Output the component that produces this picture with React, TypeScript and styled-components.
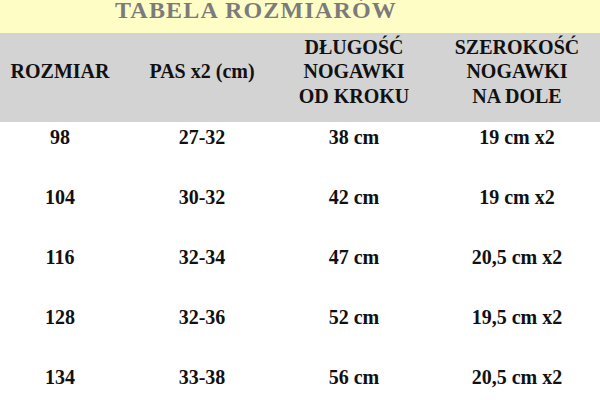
import React from "react";
import styled, { createGlobalStyle } from "styled-components";

const sizes = [
  { size: "98", waist: "27-32", length: "38 cm", width: "19 cm x2" },
  { size: "104", waist: "30-32", length: "42 cm", width: "19 cm x2" },
  { size: "116", waist: "32-34", length: "47 cm", width: "20,5 cm x2" },
  { size: "128", waist: "32-36", length: "52 cm", width: "19,5 cm x2" },
  { size: "134", waist: "33-38", length: "56 cm", width: "20,5 cm x2" },
];

export default function App() {
  return (
    <>
      <GlobalStyle />
      <Page>
        <TitleBand>
          <Title>TABELA ROZMIARÓW</Title>
        </TitleBand>

        <HeaderRow>
          <HeadCell>ROZMIAR</HeadCell>
          <HeadCell>PAS x2 (cm)</HeadCell>
          <HeadCell>
            DŁUGOŚĆ
            <br />
            NOGAWKI
            <br />
            OD KROKU
          </HeadCell>
          <HeadCell>
            SZEROKOŚĆ
            <br />
            NOGAWKI
            <br />
            NA DOLE
          </HeadCell>
        </HeaderRow>

        {sizes.map((row) => (
          <DataRow key={row.size}>
            <Cell>{row.size}</Cell>
            <Cell>{row.waist}</Cell>
            <Cell>{row.length}</Cell>
            <Cell>{row.width}</Cell>
          </DataRow>
        ))}
      </Page>
    </>
  );
}

const GlobalStyle = createGlobalStyle`
  html, body {
    margin: 0;
    padding: 0;
    background: #ffffff;
  }
`;

const Page = styled.div`
  width: 600px;
  height: 400px;
  overflow: hidden;
  background: #ffffff;
  font-family: "Liberation Serif", "Times New Roman", serif;
  font-weight: bold;
  color: #111111;
`;

const TitleBand = styled.div`
  display: flex;
  justify-content: center;
  height: 33px;
  padding-right: 88px;
  background: #fffdc6;
  overflow: hidden;
`;

const Title = styled.h1`
  margin: 0;
  font-size: 24px;
  line-height: 21px;
  letter-spacing: 1.2px;
  color: #7b7b7b;
  white-space: nowrap;
`;

// shared 4-column layout for header and rows
const Columns = styled.div`
  display: grid;
  grid-template-columns: 120px 164px 140px 176px;
  justify-items: center;
  text-align: center;

  & > :last-child {
    padding-left: 10px;
  }
`;

const HeaderRow = styled(Columns)`
  align-items: center;
  background: #d3d3d3;
  padding: 1.5px 0 14px;
  font-size: 20px;
  line-height: 24.5px;
`;

const HeadCell = styled.div`
  white-space: nowrap;
`;

const DataRow = styled(Columns)`
  align-items: start;
  height: 60px;
  box-sizing: border-box;
  padding-top: 3px;
  font-size: 20px;
  line-height: 24px;
`;

const Cell = styled.div`
  white-space: nowrap;
`;
